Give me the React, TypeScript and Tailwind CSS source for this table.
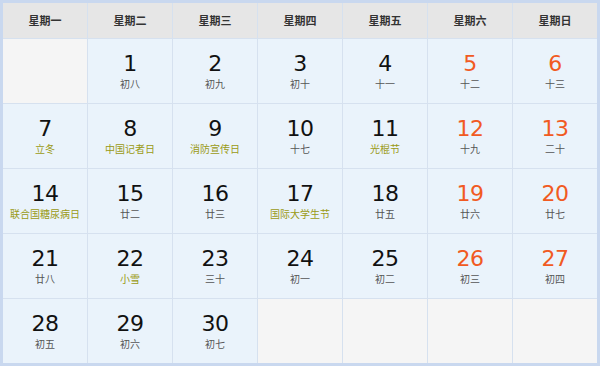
import React from "react";

type Day = { d: number; sub: string; fest?: boolean } | null;

const heads = ["星期一", "星期二", "星期三", "星期四", "星期五", "星期六", "星期日"];

const days: Day[] = [
  null,
  { d: 1, sub: "初八" },
  { d: 2, sub: "初九" },
  { d: 3, sub: "初十" },
  { d: 4, sub: "十一" },
  { d: 5, sub: "十二" },
  { d: 6, sub: "十三" },
  { d: 7, sub: "立冬", fest: true },
  { d: 8, sub: "中国记者日", fest: true },
  { d: 9, sub: "消防宣传日", fest: true },
  { d: 10, sub: "十七" },
  { d: 11, sub: "光棍节", fest: true },
  { d: 12, sub: "十九" },
  { d: 13, sub: "二十" },
  { d: 14, sub: "联合国糖尿病日", fest: true },
  { d: 15, sub: "廿二" },
  { d: 16, sub: "廿三" },
  { d: 17, sub: "国际大学生节", fest: true },
  { d: 18, sub: "廿五" },
  { d: 19, sub: "廿六" },
  { d: 20, sub: "廿七" },
  { d: 21, sub: "廿八" },
  { d: 22, sub: "小雪", fest: true },
  { d: 23, sub: "三十" },
  { d: 24, sub: "初一" },
  { d: 25, sub: "初二" },
  { d: 26, sub: "初三" },
  { d: 27, sub: "初四" },
  { d: 28, sub: "初五" },
  { d: 29, sub: "初六" },
  { d: 30, sub: "初七" },
  null,
  null,
  null,
  null,
];

export default function App() {
  return (
    <div className="w-[600px] h-[366px] bg-white">
      <div className="w-[600px] h-[366px] border-[3px] border-[#c9d8ef] bg-[#d6e1ef] grid grid-cols-7 grid-rows-[35px_repeat(5,64px)] gap-px">
        {heads.map((h) => (
          <div
            key={h}
            className="bg-[#e6e6e6] flex items-center justify-center text-[11px] font-bold text-[#333] font-['Noto_Sans_CJK_SC',sans-serif]"
          >
            {h}
          </div>
        ))}
        {days.map((day, i) => {
          if (!day) return <div key={"e" + i} className="bg-[#f5f5f5]" />;
          const weekend = i % 7 >= 5;
          return (
            <div key={i} className="bg-[#eaf3fb] flex flex-col items-center justify-center pt-px">
              <div
                className={
                  weekend
                    ? "text-[22px] leading-[24px] tracking-[-0.5px] text-[#f15a22] font-['DejaVu_Sans',sans-serif]"
                    : "text-[22px] leading-[24px] tracking-[-0.5px] text-[#111] font-['DejaVu_Sans',sans-serif]"
                }
              >
                {day.d}
              </div>
              <div
                className={
                  day.fest
                    ? "text-[10px] leading-[14px] mt-px text-[#9a9a14] font-['Noto_Sans_CJK_SC',sans-serif]"
                    : "text-[10px] leading-[14px] mt-px text-[#555] font-['Noto_Sans_CJK_SC',sans-serif]"
                }
              >
                {day.sub}
              </div>
            </div>
          );
        })}
      </div>
    </div>
  );
}
